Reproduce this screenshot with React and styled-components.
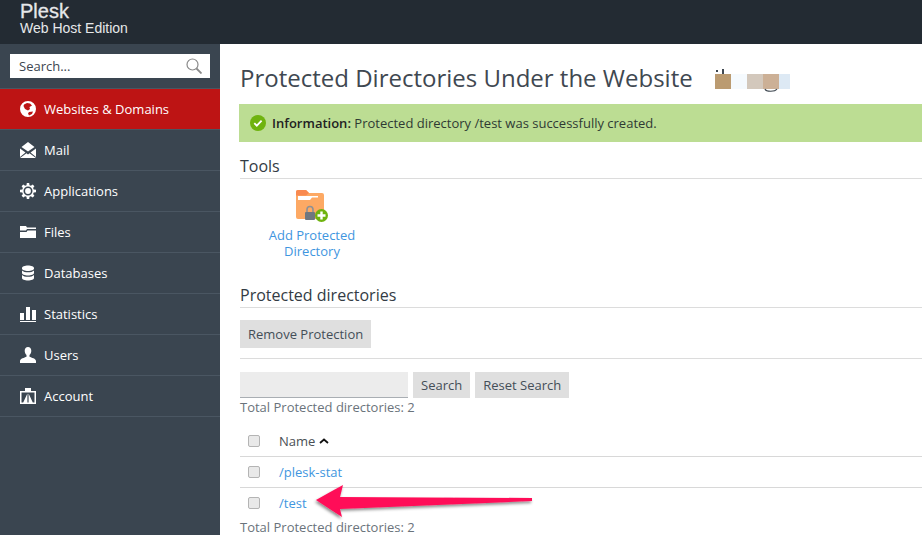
import React from 'react';
import styled, { createGlobalStyle } from 'styled-components';

const GlobalStyle = createGlobalStyle`
  html, body {
    margin: 0;
    padding: 0;
    height: 535px;
    overflow: hidden;
    background: #fff;
    font-family: 'Open Sans', sans-serif;
  }
`;

const Page = styled.div`
  position: relative;
  width: 922px;
  height: 535px;
  overflow: hidden;
  display: flex;
  flex-direction: column;
`;

const Header = styled.header`
  height: 44px;
  flex: none;
  box-sizing: border-box;
  padding: 1px 0 0 20px;
  background: #232b33;
  color: #e6e8ea;
  font-family: 'Liberation Sans', Arial, sans-serif;
`;

const Brand = styled.div`
  font-size: 20px;
  line-height: 20px;
  -webkit-text-stroke: 0.3px #e6e8ea;
`;

const Edition = styled.div`
  font-size: 14px;
  line-height: 15px;
`;

const Body = styled.div`
  display: flex;
  flex: 1;
  min-height: 0;
`;

const Sidebar = styled.nav`
  width: 220px;
  flex: none;
  background: #3a4550;
`;

const SearchWrap = styled.div`
  padding: 10px 10px 10px;
  border-bottom: 1px solid #4a5662;
`;

const SearchBox = styled.div`
  height: 24px;
  background: #fff;
  display: flex;
  align-items: center;
  justify-content: space-between;
  padding: 0 8px 0 9px;
  font-size: 13px;
  color: #3c4650;
`;

const NavItem = styled.div`
  height: 40px;
  display: flex;
  align-items: center;
  gap: 8px;
  padding-left: 20px;
  font-size: 13px;
  color: #fff;
  background: ${(p) => (p.$active ? '#bd1414' : 'transparent')};
  border-bottom: 1px solid #4a5662;
`;

const NavIcon = styled.svg`
  width: 16px;
  height: 16px;
  flex: none;
  fill: #fff;
`;

const Main = styled.main`
  flex: 1;
  min-width: 0;
  padding: 0 0 0 20px;
  color: #3c4650;
`;

const Title = styled.h1`
  margin: 0;
  height: 60px;
  display: flex;
  align-items: center;
  font-size: 24px;
  font-weight: 400;
  line-height: 30px;
  padding-top: 8px;
  box-sizing: border-box;
  color: #3f4851;
`;

const Blur = styled.span`
  position: relative;
  display: flex;
  margin: 7px 0 0 22px;
  height: 15px;
`;

const BlurCell = styled.span`
  width: ${(p) => p.$w}px;
  background: ${(p) => p.$c};
`;

const BlurMarks = styled.svg`
  position: absolute;
  left: 0;
  top: -5px;
  width: 75px;
  height: 25px;
`;

const Notice = styled.div`
  height: 38px;
  margin-left: -1px;
  display: flex;
  align-items: center;
  gap: 6px;
  padding-left: 11px;
  background: #bcdd93;
  font-size: 13px;
  color: #2f3a33;
  b {
    font-weight: 600;
    color: #222;
  }
`;

const SectionTitle = styled.h2`
  margin: 0;
  font-size: 16px;
  font-weight: 400;
  line-height: 22px;
  padding-bottom: 1px;
  border-bottom: 1px solid #dcdcdc;
  color: #333b44;
`;

const ToolsSection = styled.section`
  padding-top: 13px;
`;

const ToolLink = styled.div`
  width: 144px;
  margin-top: 11px;
  display: flex;
  flex-direction: column;
  align-items: center;
  text-align: center;
  font-size: 13px;
  line-height: 16px;
  color: #3f96e0;
  svg {
    margin-bottom: 5px;
  }
`;

const ListSection = styled.section`
  padding-top: 25px;
`;

const ActionBar = styled.div`
  margin-top: 12px;
  padding-bottom: 10px;
  border-bottom: 1px solid #dcdcdc;
`;

const Button = styled.span`
  display: inline-flex;
  align-items: center;
  height: ${(p) => p.$h}px;
  padding: 0 8px;
  background: #dfdfdf;
  font-size: 13px;
  color: #444e58;
`;

const SearchRow = styled.div`
  margin-top: 13px;
  display: flex;
  gap: 5px;
`;

const SearchField = styled.div`
  width: 168px;
  height: 25px;
  background: #ececec;
  border-bottom: 1px solid #a9aeb3;
`;

const Total = styled.div`
  font-size: 13px;
  line-height: 18px;
  color: #6a737b;
`;

const Row = styled.div`
  height: 30px;
  display: flex;
  align-items: center;
  padding-left: 8px;
  gap: 19px;
  font-size: 13px;
  border-bottom: ${(p) => (p.$plain ? 'none' : '1px solid #d8d8d8')};
`;

const HeadRow = styled(Row)`
  height: 34px;
  align-items: flex-end;
  padding-bottom: 6px;
  line-height: 18px;
`;

const Check = styled.span`
  width: 10px;
  height: 10px;
  flex: none;
  border: 1px solid #b4b4b4;
  border-radius: 2px;
  background: #e9e9e9;
  ${HeadRow} & {
    margin-bottom: 3px;
  }
`;

const NameHead = styled.span`
  display: flex;
  align-items: center;
  gap: 4px;
  color: #4a4f55;
`;

const RowLink = styled.span`
  color: #3f96e0;
`;

const Arrow = styled.svg`
  position: absolute;
  left: 310px;
  top: 480px;
  width: 225px;
  height: 50px;
  overflow: visible;
`;

const navItems = [
  { label: 'Websites & Domains', active: true, icon: (
    <path fillRule="evenodd" d="M8 0a8 8 0 1 0 0 16A8 8 0 0 0 8 0zM7 2l3 .5 2 2-2.500 1.500L10 8 8 9.500 5 8 3.500 5 4 3.500zM9 11l4-.5-1 2.500-3 1.500-1-2z" />
  ) },
  { label: 'Mail', icon: (
    <path d="M8 0l6.500 5L8 9.500 1.500 5zM0 6.500l5.500 4L0 15zM16 6.500V15l-5.500-4.500zM6.500 11.300L8 12.400l1.500-1.100L16 16H0z" />
  ) },
  { label: 'Applications', icon: (
    <path fillRule="evenodd" d="M6.800 0h2.400l.3 2.200 1.400.6 1.800-1.300 1.700 1.700-1.300 1.800.6 1.400 2.300.4v2.400l-2.300.3-.6 1.400 1.300 1.900-1.700 1.700-1.800-1.300-1.400.6-.3 2.200H6.800l-.3-2.200-1.400-.6-1.800 1.300-1.700-1.700 1.300-1.900-.6-1.400L0 9.200V6.800l2.300-.4.6-1.400-1.300-1.800 1.700-1.700 1.800 1.300 1.400-.6zM8 3.500a4.500 4.500 0 1 0 0 9 4.500 4.500 0 0 0 0-9zm0 1.600a2.900 2.900 0 1 1 0 5.800 2.900 2.900 0 0 1 0-5.800z" />
  ) },
  { label: 'Files', icon: (
    <path d="M0 2h6l1 1.500h9V5H7L6 6.500H0zM0 8h6.500l1-1.500H16V14H0z" />
  ) },
  { label: 'Databases', icon: (
    <path d="M2 3c0-1.500 2.700-2.500 6-2.500S14 1.500 14 3v.5C14 5 11.300 6 8 6S2 5 2 3.500zM2 5.500C3.200 6.800 5.500 7.300 8 7.300s4.800-.5 6-1.800V8c0 1.500-2.700 2.500-6 2.500S2 9.500 2 8zM2 10c1.200 1.300 3.500 1.800 6 1.800s4.800-.5 6-1.800v3c0 1.500-2.700 2.500-6 2.500S2 14.500 2 13z" />
  ) },
  { label: 'Statistics', icon: (
    <path d="M0 7h4v7H0zM6 1h4v13H6zM12 4h4v10h-4zM0 15h16v1H0z" />
  ) },
  { label: 'Users', icon: (
    <path d="M8 0c2 0 3.300 1.500 3.300 3.800 0 1.800-.8 3.500-1.800 4.300v1.600c2 1 6.500 1.800 6.500 4.300v2H0v-2c0-2.500 4.500-3.300 6.500-4.300V8.100C5.500 7.300 4.700 5.600 4.700 3.800 4.700 1.500 6 0 8 0z" />
  ) },
  { label: 'Account', icon: (
    <path fillRule="evenodd" d="M5 0h6v3h5v13H0V3h5zM1.500 4.500v10h13v-10zM7.400 5.500v9H3.200zM8.600 5.500l4.200 9H8.600z" />
  ) },
];

const blurCells = [
  [16, '#bb9b71'], [16, '#f5fafe'], [16, '#d3c8bc'], [16, '#ccb096'], [11, '#dde9f4'],
];

function App() {
  return (
    <Page>
      <GlobalStyle />
      <Header>
        <Brand>Plesk</Brand>
        <Edition>Web Host Edition</Edition>
      </Header>
      <Body>
        <Sidebar>
          <SearchWrap>
            <SearchBox>
              Search...
              <svg width="16" height="16" viewBox="0 0 16 16" fill="none" stroke="#8a8a8a">
                <circle cx="6.500" cy="6.500" r="5.500" strokeWidth="1.200" />
                <path d="M10.500 10.500l5 5" strokeWidth="1.800" />
              </svg>
            </SearchBox>
          </SearchWrap>
          {navItems.map((item) => (
            <NavItem key={item.label} $active={item.active}>
              <NavIcon viewBox="0 0 16 16">{item.icon}</NavIcon>
              {item.label}
            </NavItem>
          ))}
        </Sidebar>
        <Main>
          <Title>
            Protected Directories Under the Website
            <Blur>
              {blurCells.map(([w, c], i) => (
                <BlurCell key={i} $w={w} $c={c} />
              ))}
              <BlurMarks viewBox="0 0 75 25" fill="none">
                <path d="M1 1h2v2H1zM7 0h2v5H7z" fill="#3f4851" />
                <path d="M50 20c1 3 10 3 12 0" stroke="#3f4851" strokeWidth="1.200" />
              </BlurMarks>
            </Blur>
          </Title>
          <Notice>
            <svg width="16" height="16" viewBox="0 0 16 16">
              <circle cx="8" cy="8" r="8" fill="#6fb30f" />
              <path d="M4.300 8.200l2.500 2.500 4.800-5" fill="none" stroke="#fff" strokeWidth="1.800" />
            </svg>
            <span><b>Information:</b> Protected directory /test was successfully created.</span>
          </Notice>
          <ToolsSection>
            <SectionTitle>Tools</SectionTitle>
            <ToolLink>
              <svg width="32" height="32" viewBox="0 0 32 32">
                <path d="M0 2a2 2 0 0 1 2-2h8l3 3h13a2 2 0 0 1 2 2v22a2 2 0 0 1-2 2H2a2 2 0 0 1-2-2z" fill="#fda964" />
                <path d="M0 2a2 2 0 0 1 2-2h8l3 3-3 2.500H0z" fill="#f98a50" />
                <path d="M2 6h20v1.500h-6L14 10H2z" fill="#fff" />
                <rect x="9" y="22" width="10" height="8" rx="1" fill="#6f7780" />
                <path d="M11 22v-2.500a3 3 0 0 1 6 0V22" fill="none" stroke="#8d9196" strokeWidth="1.600" />
                <circle cx="25.500" cy="25.500" r="6.500" fill="#6fb30f" />
                <path d="M25.500 21.500v8M21.500 25.500h8" stroke="#fff" strokeWidth="2.400" />
              </svg>
              <span>Add Protected<br />Directory</span>
            </ToolLink>
          </ToolsSection>
          <ListSection>
            <SectionTitle>Protected directories</SectionTitle>
            <ActionBar>
              <Button $h={28}>Remove Protection</Button>
            </ActionBar>
            <SearchRow>
              <SearchField />
              <Button $h={26}>Search</Button>
              <Button $h={26}>Reset Search</Button>
            </SearchRow>
            <Total>Total Protected directories: 2</Total>
            <HeadRow>
              <Check />
              <NameHead>
                Name
                <svg width="10" height="6" viewBox="0 0 10 6" fill="none" stroke="#111" strokeWidth="1.800">
                  <path d="M1 5l4-3.500L9 5" />
                </svg>
              </NameHead>
            </HeadRow>
            <Row>
              <Check />
              <RowLink>/plesk-stat</RowLink>
            </Row>
            <Row $plain>
              <Check />
              <RowLink>/test</RowLink>
            </Row>
            <Total>Total Protected directories: 2</Total>
          </ListSection>
        </Main>
      </Body>
      <Arrow viewBox="0 0 225 50">
        <defs>
          <filter id="arrowShadow" x="-10%" y="-30%" width="120%" height="170%">
            <feDropShadow dx="-1" dy="2" stdDeviation="1.500" floodColor="#000" floodOpacity="0.45" />
          </filter>
        </defs>
        <path
          d="M6 20Q20 12 33 5L30 17 222 18V21L30 29 32 37Q18 28 6 20z"
          fill="#ff1158"
          filter="url(#arrowShadow)"
        />
      </Arrow>
    </Page>
  );
}

export default App;
